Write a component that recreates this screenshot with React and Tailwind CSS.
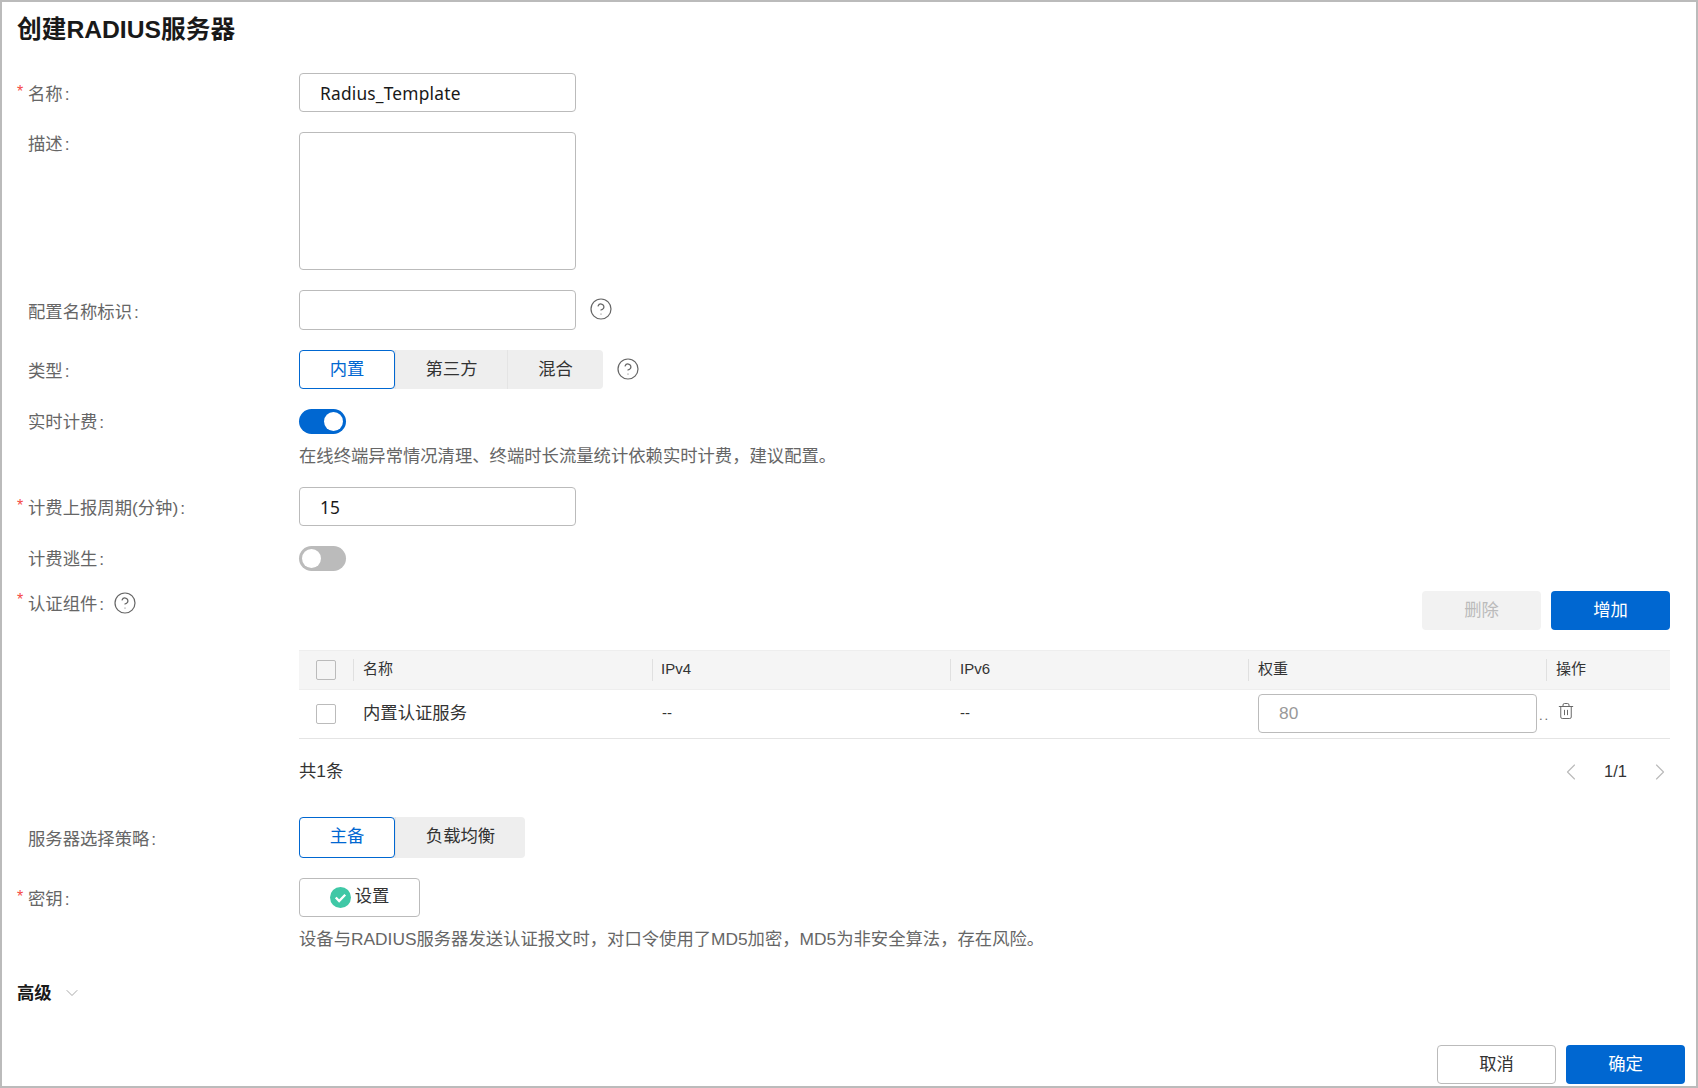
import React from 'react';
import { ChevronDown, ChevronLeft, ChevronRight, CircleHelp, Trash2 } from 'lucide-react';

const inputClass = 'w-[277px] rounded-[4px] border border-[#bbbbbb] bg-white px-5 text-[17.33px] text-[#191919] outline-none';

function Label({ required, children, className = 'pt-[3px]', extra }) {
    return (
        <div className={`flex w-[282px] shrink-0 items-center text-[17.33px] leading-[20px] text-[#666666] ${className}`}>
            <span className="w-[11px] shrink-0 self-start text-[16px] leading-[16px] text-[#f54a45]">{required ? '*' : ''}</span>
            {children}
            <span className="ml-[2px]">:</span>
            {extra}
        </div>
    );
}

function Help() {
    return <CircleHelp size={24} strokeWidth={1.2} className="text-[#666666]" />;
}

function Segmented({ options, widths, height }) {
    return (
        <div className={`flex rounded-[4px] bg-[#eeeeee] ${height}`}>
            {options.map((option, index) => (
                <div
                    key={option}
                    className={`flex items-center justify-center text-[17.33px] ${widths[index]} ${
                        index === 0
                            ? 'rounded-[4px] border border-[#0067d1] bg-white text-[#0067d1]'
                            : 'border-l border-[#e4e4e4] text-[#333333]'
                    }`}
                >
                    {option}
                </div>
            ))}
        </div>
    );
}

function Toggle({ on }) {
    return (
        <div className={`flex h-[25px] w-[47px] items-center rounded-full px-[3px] ${on ? 'justify-end bg-[#0067d1]' : 'justify-start bg-[#bbbbbb]'}`}>
            <span className="h-[19px] w-[19px] rounded-full bg-white" />
        </div>
    );
}

function ColHead({ className, children }) {
    return (
        <div className={`flex h-[22px] items-center border-l border-[#e0e0e0] text-[15px] text-[#333333] ${className}`}>
            {children}
        </div>
    );
}

function Checkbox({ bg }) {
    return <span className={`block h-[20px] w-[20px] rounded-[2px] border border-[#bbbbbb] ${bg}`} />;
}

export default function App() {
    return (
        <div
            className="flex h-[1088px] w-full flex-col border-2 border-[#bbbbbb] bg-white pl-[15px] pr-[26px]"
            style={{ fontFamily: '"Liberation Sans", "Noto Sans CJK SC", sans-serif' }}
        >
            <h1 className="flex h-[55px] items-center text-[24.7px] font-bold text-[#191919]">创建RADIUS服务器</h1>

            <div className="mt-[16px] flex flex-col gap-5">
                <div className="flex items-center">
                    <Label required>名称</Label>
                    <input className={`${inputClass} h-[39px] font-['Noto_Sans'] tracking-[0.2px]`} defaultValue="Radius_Template" />
                </div>

                <div className="flex items-start">
                    <Label className="pt-[2px]">描述</Label>
                    <div className={`${inputClass} h-[138px]`} />
                </div>

                <div className="flex items-center">
                    <Label>配置名称标识</Label>
                    <input className={`${inputClass} h-[40px]`} />
                    <span className="ml-[13px] -mt-[3px]"><Help /></span>
                </div>

                <div className="flex items-center">
                    <Label>类型</Label>
                    <Segmented options={['内置', '第三方', '混合']} widths={['w-[96px]', 'w-[112px]', 'w-[96px]']} height="h-[39px]" />
                    <span className="ml-[13px] -mt-[2px]"><Help /></span>
                </div>

                <div className="flex flex-col">
                    <div className="flex items-center">
                        <Label className="pt-[1px]">实时计费</Label>
                        <Toggle on />
                    </div>
                    <div className="mt-[11px] pl-[282px] text-[17.33px] leading-[22px] text-[#666666]">
                        在线终端异常情况清理、终端时长流量统计依赖实时计费，建议配置。
                    </div>
                </div>

                <div className="flex items-center">
                    <Label required>计费上报周期(分钟)</Label>
                    <input className={`${inputClass} h-[39px] font-['Noto_Sans']`} defaultValue="15" />
                </div>

                <div className="flex items-center">
                    <Label className="pt-[1px]">计费逃生</Label>
                    <Toggle />
                </div>

                <div className="flex items-start">
                    <Label
                        required
                        className="pt-[1px]"
                        extra={<span className="ml-[9px] -mt-[1px]"><Help /></span>}
                    >
                        认证组件
                    </Label>
                    <div className="flex-1">
                        <div className="flex justify-end gap-[10px]">
                            <button className="h-[39px] w-[119px] rounded-[4px] bg-[#f2f2f2] text-[17.33px] text-[#bbbbbb]">删除</button>
                            <button className="h-[39px] w-[119px] rounded-[4px] bg-[#0067d1] text-[17.33px] text-white">增加</button>
                        </div>

                        <div className="mt-[19.5px]">
                            <div className="flex h-[40px] items-center border-y border-[#eeeeee] bg-[#f5f5f5]">
                                <span className="ml-[17px] w-[37px]"><Checkbox bg="bg-[#f5f5f5]" /></span>
                                <ColHead className="w-[299px] pl-[9px]">名称</ColHead>
                                <ColHead className="w-[298px] pl-2">IPv4</ColHead>
                                <ColHead className="w-[298px] pl-[9px]">IPv6</ColHead>
                                <ColHead className="w-[298px] pl-[9px]">权重</ColHead>
                                <ColHead className="flex-1 pl-[9px]">操作</ColHead>
                            </div>
                            <div className="flex h-[49px] items-center border-b border-[#e4e4e4] text-[17.33px] text-[#333333]">
                                <span className="ml-[17px] w-[47px]"><Checkbox bg="bg-white" /></span>
                                <span className="w-[299px]">内置认证服务</span>
                                <span className="w-[298px] text-[15px]">--</span>
                                <span className="w-[298px] text-[15px]">--</span>
                                <div className="flex h-[39px] w-[279px] items-center rounded-[4px] border border-[#bbbbbb] pl-5 text-[#999999]">80</div>
                                <span className="ml-[2px] mt-1 w-[18px] text-[13px] tracking-[2px] text-[#666666]">..</span>
                                <Trash2 size={18} strokeWidth={1.3} className="-mt-[6px] text-[#666666]" />
                            </div>
                        </div>

                        <div className="flex h-[58px] items-center justify-between pt-[8px]">
                            <span className="text-[17.33px] text-[#333333]">共1条</span>
                            <div className="-mr-[4px] flex items-center text-[16.5px] text-[#333333]">
                                <ChevronLeft size={28} strokeWidth={1} className="text-[#bbbbbb]" />
                                <span className="mx-[19px]">1/1</span>
                                <ChevronRight size={28} strokeWidth={1} className="text-[#bbbbbb]" />
                            </div>
                        </div>
                    </div>
                </div>

                <div className="flex items-center">
                    <Label>服务器选择策略</Label>
                    <Segmented options={['主备', '负载均衡']} widths={['w-[96px]', 'w-[130px]']} height="h-[41px]" />
                </div>

                <div className="flex flex-col">
                    <div className="flex items-center">
                        <Label required>密钥</Label>
                        <button className="flex h-[39px] w-[121px] items-center justify-center gap-[4px] rounded-[4px] border border-[#bbbbbb] text-[17.33px] text-[#333333]">
                            <svg width="21" height="21" viewBox="0 0 20 20">
                                <circle cx="10" cy="10" r="10" fill="#3fc8a6" />
                                <path d="M5.5 10l3.2 3.4 5.8-6" fill="none" stroke="#ffffff" strokeWidth="2.2" />
                            </svg>
                            设置
                        </button>
                    </div>
                    <div className="mt-[10px] pl-[282px] text-[17.33px] leading-[24px] text-[#666666]">
                        设备与RADIUS服务器发送认证报文时，对口令使用了MD5加密，MD5为非安全算法，存在风险。
                    </div>
                </div>
            </div>

            <div className="mt-[30px] flex items-center gap-[10px]">
                <span className="text-[17.33px] font-bold text-[#191919]">高级</span>
                <ChevronDown size={20} strokeWidth={1} className="text-[#999999]" />
            </div>

            <div className="mt-auto mb-[2px] -mr-[15px] flex justify-end gap-[10px]">
                <button className="h-[39px] w-[119px] rounded-[4px] border border-[#bbbbbb] bg-white text-[17.33px] text-[#333333]">取消</button>
                <button className="h-[39px] w-[119px] rounded-[4px] bg-[#0067d1] text-[17.33px] text-white">确定</button>
            </div>
        </div>
    );
}
